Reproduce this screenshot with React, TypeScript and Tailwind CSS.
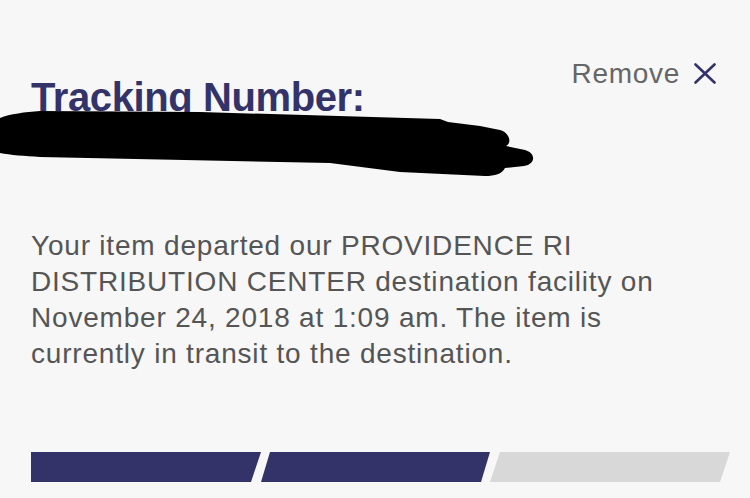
const font = { fontFamily: '"Liberation Sans", Arial, sans-serif' };

export default function App() {
  return (
    <div
      className="h-[498px] w-[750px] overflow-hidden bg-[#f7f7f7] px-[31px] pt-[60px] [font-family:'Liberation_Sans',Arial,sans-serif]"
    >
      {/* Header row */}
      <div className="relative flex items-start justify-between">
        <h1 className="mt-[17px] text-[40px] font-bold leading-none tracking-[-0.4px] text-[#33336a]">
          Tracking Number:
        </h1>
        <button className="mr-[3px] flex items-center gap-[14px] text-[28px] leading-none tracking-[0.7px] text-[#666666]">
          Remove
          <svg width="22" height="21" viewBox="0 0 22 21" className="mt-[-2px]">
            <path d="M1.5 1.5 L20.5 19.5 M20.5 1.5 L1.5 19.5" stroke="#33336a" strokeWidth="2.6" strokeLinecap="round" />
          </svg>
        </button>

        {/* Redaction scribble over the tracking number */}
        <svg
          className="absolute left-[-31px] top-[40px]"
          width="560"
          height="90"
          viewBox="0 100 560 90"
        >
          <path
            d="M0,118 C10,114 25,112 40,111 L200,112 L440,119 L448,122 L480,126 L500,130 C510,133 512,143 506,146 L525,150 C536,153 536,164 524,166 L505,168 C502,174 495,176 485,176 L400,172 L330,163 L40,157 C25,156 10,155 0,153 Z"
            fill="#000"
          />
        </svg>
      </div>

      {/* Status text */}
      <p className="mt-[111px] text-[28px] leading-[36px] tracking-[0.8px] text-[#555555]" style={font}>
        Your item departed our PROVIDENCE RI DISTRIBUTION CENTER destination facility on November 24,
        2018 at 1:09 am. The item is currently in transit to the destination.
      </p>

      {/* Progress bar */}
      <div className="mt-[80px] mr-[-11px] flex h-[30px]">
        <div className="w-[230px] bg-[#33336a] [clip-path:polygon(0_0,100%_0,calc(100%-10px)_100%,0_100%)]" />
        <div className="w-[229px] bg-[#33336a] [clip-path:polygon(9px_0,100%_0,calc(100%-9px)_100%,0_100%)]" />
        <div className="w-[240px] bg-[#d8d8d8] [clip-path:polygon(10px_0,100%_0,calc(100%-10px)_100%,0_100%)]" />
      </div>
    </div>
  );
}
